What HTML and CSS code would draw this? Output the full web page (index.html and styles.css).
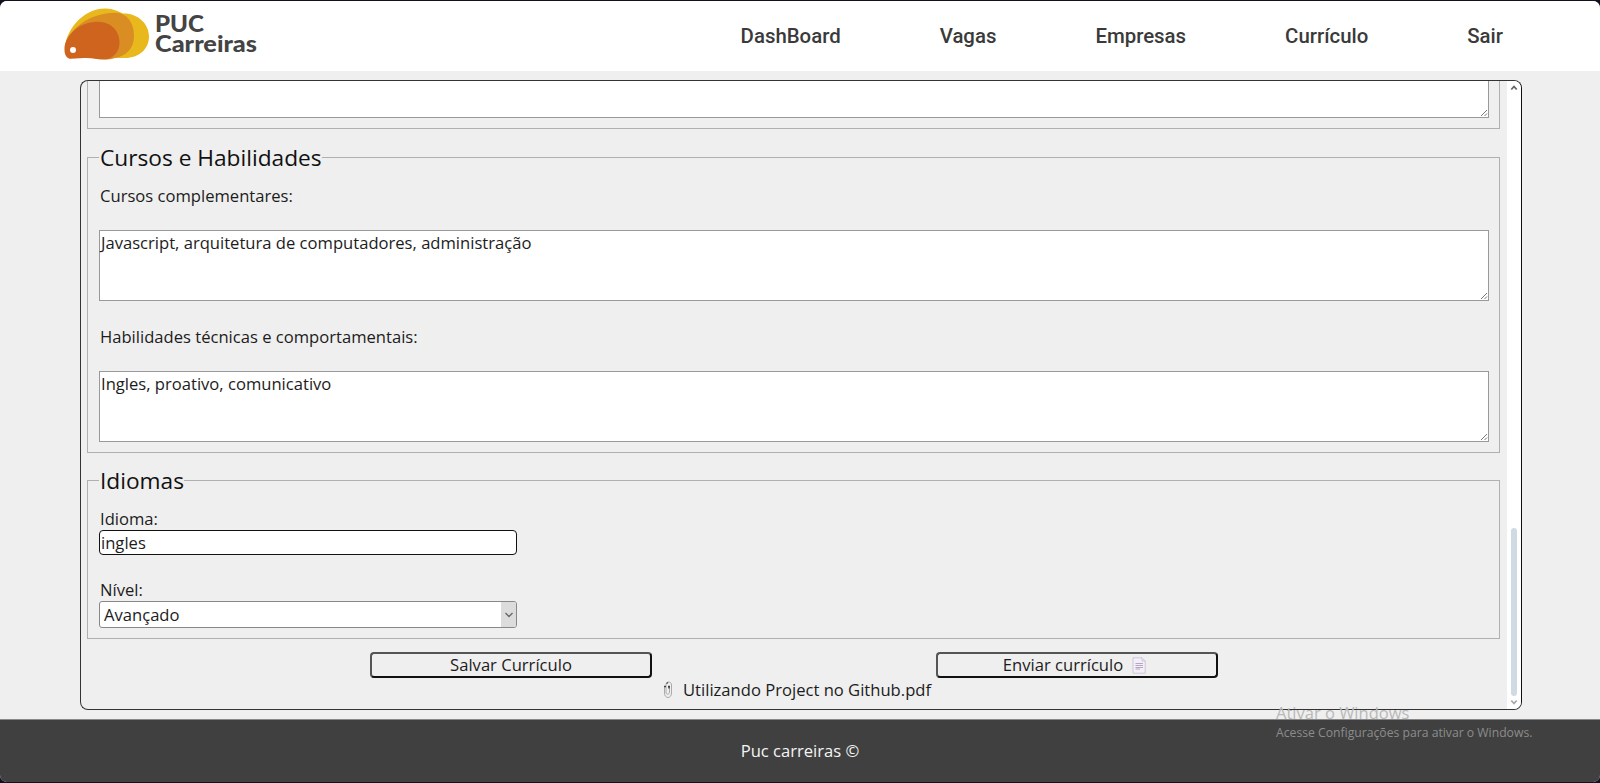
FILE: index.html
```html
<!DOCTYPE html>
<html lang="pt-BR">
<head>
<meta charset="utf-8">
<title>PUC Carreiras</title>
<link rel="stylesheet" href="styles.css">
</head>
<body>
<div class="window">
  <header class="header">
    <svg class="logo" width="200" height="60" viewBox="60 4 200 60">
      <path fill="#e8b81d" d="M65 49C65 32 82 8 106 8.500C113 8.700 118 11 123 13.500C138 13 149 24 149 36.500C149 49 139 58 125 58L72 58Z"/>
      <path fill="#d98d22" d="M65 49C65 35 84 12.700 116 12.700C127 13 134 23 134 35.500C134 49 126 56 115 58C110 59.500 102 60.500 95 58.500Z"/>
      <path fill="#cf641f" d="M64.500 50C64 36 79 21.500 98 21.800C111 22 119.500 31 119.500 42C119.500 51 115 56 109 58.700C101 60.500 94 57.500 84 58L71 58.800C67 59 64.500 55 64.500 50Z"/>
      <circle cx="73" cy="50" r="3" fill="#fff"/>
      <text class="logo-text" x="155" y="32" textLength="49" lengthAdjust="spacingAndGlyphs">PUC</text>
      <text class="logo-text" x="155" y="52" textLength="102" lengthAdjust="spacingAndGlyphs">Carreiras</text>
    </svg>
    <nav class="nav">
      <a>DashBoard</a><a>Vagas</a><a>Empresas</a><a>Currículo</a><a>Sair</a>
    </nav>
  </header>

  <main class="main">
    <div class="panel">
      <div class="content">
        <div class="group group-cut">
          <div class="area"><svg class="grip" width="8" height="8"><path d="M1 7L7 1M4.500 7L7 4.500"/></svg></div>
        </div>
        <fieldset class="group">
          <legend>Cursos e Habilidades</legend>
          <div class="label">Cursos complementares:</div>
          <div class="area area-full">Javascript, arquitetura de computadores, administração<svg class="grip" width="8" height="8"><path d="M1 7L7 1M4.500 7L7 4.500"/></svg></div>
          <div class="label label-skills">Habilidades técnicas e comportamentais:</div>
          <div class="area area-full">Ingles, proativo, comunicativo<svg class="grip" width="8" height="8"><path d="M1 7L7 1M4.500 7L7 4.500"/></svg></div>
        </fieldset>
        <fieldset class="group group-lang">
          <legend>Idiomas</legend>
          <div class="label">Idioma:</div>
          <div class="input">ingles</div>
          <div class="label label-level">Nível:</div>
          <div class="select"><span>Avançado</span><i class="drop"><svg width="10" height="8"><path d="M1.500 2L5 5.500L8.500 2"/></svg></i></div>
        </fieldset>
        <div class="actions">
          <div class="button">Salvar Currículo</div>
          <div class="button button-send">Enviar currículo
            <svg class="doc" width="14" height="17" viewBox="0 0 14 17"><path class="sheet" d="M1 .8H10L13.200 4V16.200H1Z"/><path class="fold" d="M10 .8V4H13.200"/><path class="lines" d="M3.500 6.500H11M3.500 8.500H11M3.500 10.500H11M3.500 12H8"/></svg>
          </div>
        </div>
        <div class="file">
          <svg class="clip" width="10" height="18" viewBox="0 0 10 18"><path d="M1.500 6V12C1.500 18 8.500 18 8.500 12V4C8.500 0 3 0 3 4V11C3 14 6.500 14 6.500 11V6"/><path class="clip-dark" d="M1 5.500H3M5 5.500H7M3.500 2.500L5 1.500M6 7.500V6"/></svg>
          <span>Utilizando Project no Github.pdf</span>
        </div>
      </div>
      <div class="scrollbar">
        <svg width="8" height="7"><path class="up" d="M1.300 5.500L4 2.500L6.700 5.500"/></svg>
        <div class="thumb"></div>
        <svg width="8" height="7"><path class="down" d="M1.300 1.500L4 4.500L6.700 1.500"/></svg>
      </div>
    </div>
  </main>

  <footer class="footer">Puc carreiras ©</footer>
  <div class="watermark"><div class="wm-title">Ativar o Windows</div><div class="wm-sub">Acesse Configurações para ativar o Windows.</div></div>
</div>
</body>
</html>
```

FILE: styles.css
```css
* { box-sizing: border-box; }
body {
  margin: 0;
  padding: 1px 0;
  height: 783px;
  overflow: hidden;
  background: #11111f;
  font: 16.6px/24px "Open Sans", sans-serif;
  color: #1c1c1c;
}
.window {
  position: relative;
  height: 781px;
  display: flex;
  flex-direction: column;
  background: #efefef;
  border-radius: 7px;
  overflow: hidden;
}
.header {
  height: 70px;
  flex: none;
  display: flex;
  justify-content: space-between;
  padding: 3px 97px 0 60px;
  background: #fff;
}
.logo { display: block; }
.logo-text { font: 900 22px Lato, sans-serif; fill: #444; }
.nav {
  display: flex;
  gap: 99px;
  padding-top: 20px;
  font: 500 20.4px/24px Roboto, sans-serif;
  color: #3a3a3a;
}
.main { flex: 1; padding: 9px 78px 0 80px; }
.panel {
  height: 630px;
  display: flex;
  border: 1px solid #333;
  border-right-color: #111;
  border-radius: 8px;
  overflow: hidden;
}
.content { flex: 1; }
.group {
  margin: 13px 7px 0 6px;
  padding: 11px 10px 10px 11px;
  border: 1px solid #b0b0b0;
  min-width: 0;
}
.group-cut { margin-top: 0; padding-top: 0; border-top: 0; }
.group-cut .area { height: 37px; border-top: 0; }
.group-lang { margin-top: 12px; }
legend {
  padding: 2px 0 0 1px;
  font-size: 22.7px;
  line-height: 28px;
  color: #111;
}
.label { height: 24px; padding-left: 1px; line-height: 25px; }
.label-skills { margin-top: 23px; }
.label-level { margin-top: 22px; }
.area {
  position: relative;
  background: #fff;
  border: 1px solid #999;
  padding-left: 1px;
}
.area-full { height: 71px; margin-top: 23px; }
.grip { position: absolute; right: 0; bottom: 0; fill: none; stroke: #777; }
.input {
  width: 418px;
  height: 25px;
  padding-left: 1px;
  line-height: 24px;
  background: #fff;
  border: 1px solid #111;
  border-radius: 4px;
}
.select {
  width: 418px;
  height: 27px;
  display: flex;
  justify-content: space-between;
  padding-left: 4px;
  line-height: 26px;
  background: #fff;
  border: 1px solid #888;
  border-radius: 3px;
  overflow: hidden;
}
.drop {
  width: 15px;
  display: flex;
  align-items: center;
  justify-content: center;
  background: #dcdcdc;
}
.drop path { fill: none; stroke: #666; stroke-width: 1.3; }
.actions {
  display: flex;
  gap: 284px;
  padding: 13px 0 0 289px;
}
.button {
  width: 282px;
  height: 26px;
  display: flex;
  align-items: center;
  justify-content: center;
  border: 2px solid #111;
  border-top-color: #555;
  border-left-color: #555;
  border-radius: 4px;
}
.button-send { padding-right: 5px; }
.doc { margin-left: 9px; fill: none; }
.sheet { fill: #f3eef8; stroke: #cfc6d8; }
.fold { stroke: #cfc6d8; }
.lines { stroke: #b3a8bf; }
.file {
  display: flex;
  align-items: center;
  gap: 10px;
  padding-left: 582px;
}
.clip { fill: none; stroke: #aaa; }
.clip-dark { stroke: #444; stroke-width: 1.5; }
.scrollbar {
  width: 14px;
  display: flex;
  flex-direction: column;
  align-items: center;
  justify-content: flex-end;
  padding: 3px 1px 3px 0;
  background: #fff;
}
.scrollbar svg:first-child { margin-bottom: auto; }
.scrollbar path { fill: none; stroke-width: 1.8; }
.up { stroke: #666; }
.down { stroke: #aaa; }
.thumb {
  width: 6px;
  height: 168px;
  margin-bottom: 3px;
  border-radius: 3px;
  background: #cfdae2;
}
.footer {
  height: 63px;
  flex: none;
  padding-top: 19px;
  border-top: 1px solid #888;
  background: #404040;
  color: #f4f4f4;
  text-align: center;
}
.watermark {
  position: absolute;
  left: 1276px;
  top: 700px;
  white-space: nowrap;
}
.wm-title { font-size: 16.5px; line-height: 24px; color: #b9b9b9; }
.wm-sub { font-size: 12.2px; line-height: 16px; color: #8c8c8c; }
```
